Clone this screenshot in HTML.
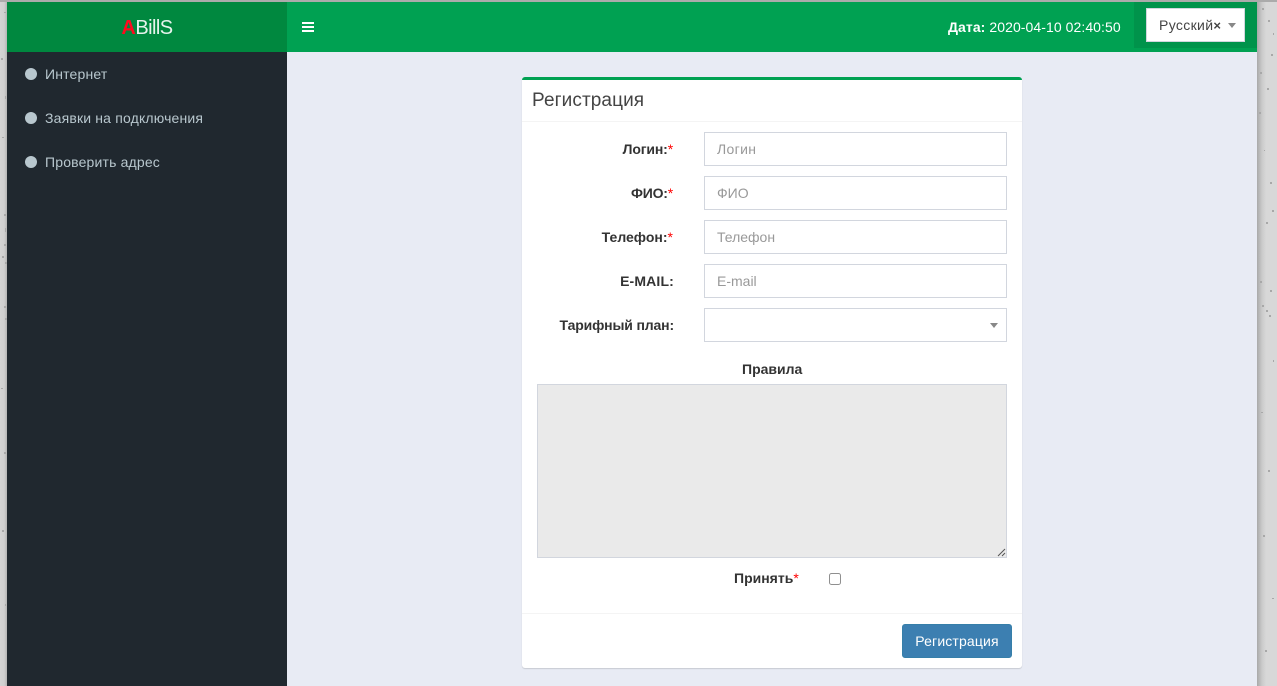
<!DOCTYPE html>
<html lang="ru">
<head>
<meta charset="utf-8">
<title>Регистрация</title>
<style>
*{box-sizing:border-box}
html,body{margin:0;padding:0;width:1277px;height:686px;overflow:hidden;background:#d6d6d6;font-family:"Liberation Sans","DejaVu Sans",sans-serif;font-size:14px;color:#333}
.a{position:absolute}
#bgL{left:0;top:0;width:7px;height:686px;background:linear-gradient(90deg,#d4d4d4,#cfcfcf 60%,#b4b4b4)}
#bgR{left:1257px;top:0;width:20px;height:686px;background:linear-gradient(90deg,#a9a9a9,#cacaca 5px,#d8d8d8 9px)}
#topbar{left:0;top:0;width:1277px;height:2px;background:#ababab}
#win{left:7px;top:2px;width:1250px;height:684px;background:#e8ebf4;overflow:hidden}
#logo{left:7px;top:2px;width:280px;height:50px;background:#00883f;color:#fff;font-size:20px;line-height:52px;text-align:center;letter-spacing:-.55px}
#logo b{color:#ff0a1e;font-size:20px}
#logo span{font-weight:normal;opacity:.9}
#nav{left:287px;top:2px;width:970px;height:50px;background:#00a152}
#side{left:7px;top:52px;width:280px;height:634px;background:#20282f}
.mi{position:absolute;left:45px;color:#b8c7ce;font-size:14px;line-height:20px;white-space:nowrap;letter-spacing:.17px}
.dot{position:absolute;left:25px;width:12px;height:12px;border-radius:50%;background:#b8c7ce}
#burger{left:302px;top:22px;width:12px;height:10px}
#burger i{display:block;height:2px;background:#fff;margin-bottom:2px}
#date{left:948px;top:17px;color:#fff;font-size:14px;line-height:20px;white-space:nowrap;letter-spacing:.07px}
#langbg{left:1134px;top:2px;width:123px;height:46px;background:#00934b}
#lang{left:1146px;top:8px;width:99px;height:34px;background:#fff;border:1px solid #d2d6de;color:#444;font-size:14px;line-height:32px;padding-left:12px;white-space:nowrap;letter-spacing:.35px}
.car{position:absolute;width:0;height:0;border-left:4px solid transparent;border-right:4px solid transparent;border-top:5px solid #888}
#box{left:522px;top:77px;width:500px;height:591px;background:#fff;border-top:3px solid #00a152;border-radius:3px;box-shadow:0 1px 1px rgba(0,0,0,.14)}
#title{left:532px;top:90px;font-size:19px;line-height:22px;color:#444;white-space:nowrap;letter-spacing:.1px}
.hr{position:absolute;left:522px;width:500px;height:1px;background:#f4f4f4}
.lb{position:absolute;right:603px;font-weight:bold;font-size:14px;line-height:20px;color:#333;white-space:nowrap}
.lb em,.st{color:#f00;font-style:normal;font-weight:bold}
.lb em{font-weight:normal}
.in{position:absolute;left:704px;width:303px;height:34px;border:1px solid #d2d6de;background:#fff;color:#999;font-size:14px;line-height:32px;padding-left:12px;white-space:nowrap}
#ta{left:537px;top:384px;width:470px;height:174px;background:#eaeaea;border:1px solid #d2d6de}
#cb{left:829px;top:573px;width:12px;height:12px;border:1px solid #8f8f8f;border-radius:2.5px;background:#fff}
#btn{left:902px;top:624px;width:110px;height:34px;background:#3c7fb1;border:1px solid #367fa9;border-radius:3px;color:#fff;font-size:14px;line-height:32px;text-align:center;white-space:nowrap;letter-spacing:.15px}
</style>
</head>
<body>
<div class="a" id="bgL"></div>
<div class="a" id="bgR"></div>
<svg class="a" style="left:0;top:0" width="1277" height="686" viewBox="0 0 1277 686" fill="#a8a8a8">
<rect x="4" y="12" width="2" height="1"/><rect x="1" y="58" width="2" height="2"/><rect x="5" y="96" width="1" height="3"/><rect x="2" y="137" width="2" height="1"/><rect x="4" y="214" width="2" height="2"/><rect x="5" y="228" width="1" height="4"/><rect x="4" y="244" width="2" height="2"/><rect x="2" y="256" width="2" height="2"/><rect x="5" y="262" width="2" height="2"/><rect x="4" y="306" width="2" height="2"/><rect x="5" y="318" width="2" height="2"/><rect x="1" y="388" width="2" height="1"/><rect x="4" y="452" width="2" height="2"/><rect x="2" y="530" width="2" height="2"/><rect x="5" y="604" width="1" height="2"/>
<rect x="1262" y="8" width="2" height="2"/><rect x="1268" y="20" width="2" height="2"/><rect x="1273" y="33" width="1" height="2"/><rect x="1260" y="72" width="2" height="2"/><rect x="1271" y="54" width="2" height="2"/><rect x="1267" y="88" width="2" height="2"/><rect x="1259" y="112" width="2" height="2"/><rect x="1264" y="150" width="1" height="1"/><rect x="1270" y="182" width="2" height="2"/><rect x="1272" y="210" width="2" height="2"/><rect x="1266" y="222" width="2" height="2"/><rect x="1260" y="281" width="2" height="2"/><rect x="1270" y="290" width="2" height="2"/><rect x="1262" y="305" width="2" height="2"/><rect x="1266" y="310" width="2" height="2"/><rect x="1269" y="315" width="2" height="2"/><rect x="1273" y="360" width="1" height="2"/><rect x="1261" y="412" width="2" height="1"/><rect x="1268" y="470" width="2" height="2"/><rect x="1263" y="535" width="2" height="2"/><rect x="1272" y="598" width="2" height="1"/><rect x="1265" y="650" width="2" height="2"/>
</svg>
<div class="a" id="topbar"></div>
<div class="a" id="win"></div>
<div class="a" id="logo"><b>A</b><span>BillS</span></div>
<div class="a" id="nav"></div>
<div class="a" id="side"></div>

<div class="dot" style="top:68px"></div>
<div class="mi" style="top:64px">Интернет</div>
<div class="dot" style="top:112px"></div>
<div class="mi" style="top:108px">Заявки на подключения</div>
<div class="dot" style="top:156px"></div>
<div class="mi" style="top:152px">Проверить адрес</div>

<div class="a" id="burger"><i></i><i></i><i></i></div>
<div class="a" id="date"><b>Дата:</b> 2020-04-10 02:40:50</div>
<div class="a" id="langbg"></div>
<div class="a" id="lang">Русский<b style="font-size:13px">×</b></div>
<div class="car" style="left:1228px;top:23px"></div>

<div class="a" id="box"></div>
<div class="a" id="title">Регистрация</div>
<div class="hr" style="top:121px"></div>

<div class="lb" style="top:139px;right:604px;letter-spacing:-.15px">Логин:<em>*</em></div>
<div class="in" style="top:132px;letter-spacing:.35px">Логин</div>
<div class="lb" style="top:183px;right:604px;letter-spacing:-.2px">ФИО:<em>*</em></div>
<div class="in" style="top:176px">ФИО</div>
<div class="lb" style="top:227px;right:604px">Телефон:<em>*</em></div>
<div class="in" style="top:220px">Телефон</div>
<div class="lb" style="top:271px;letter-spacing:.15px">E-MAIL:</div>
<div class="in" style="top:264px">E-mail</div>
<div class="lb" style="top:315px;letter-spacing:-.15px">Тарифный план:</div>
<div class="in" style="top:308px"></div>
<div class="car" style="left:990px;top:323px"></div>

<div class="a" style="left:742px;top:359px;font-weight:bold;font-size:14px;line-height:20px;white-space:nowrap">Правила</div>
<div class="a" id="ta"></div>
<svg class="a" style="left:997px;top:548px" width="9" height="9" viewBox="0 0 9 9"><path d="M1 8 8 1M5 8 8 5" stroke="#555" stroke-width="1" fill="none"/></svg>

<div class="a" style="left:734px;top:568px;font-weight:bold;font-size:14px;line-height:20px;white-space:nowrap">Принять<span class="st" style="font-weight:normal">*</span></div>
<div class="a" id="cb"></div>

<div class="hr" style="top:613px"></div>
<div class="a" id="btn">Регистрация</div>
</body>
</html>
